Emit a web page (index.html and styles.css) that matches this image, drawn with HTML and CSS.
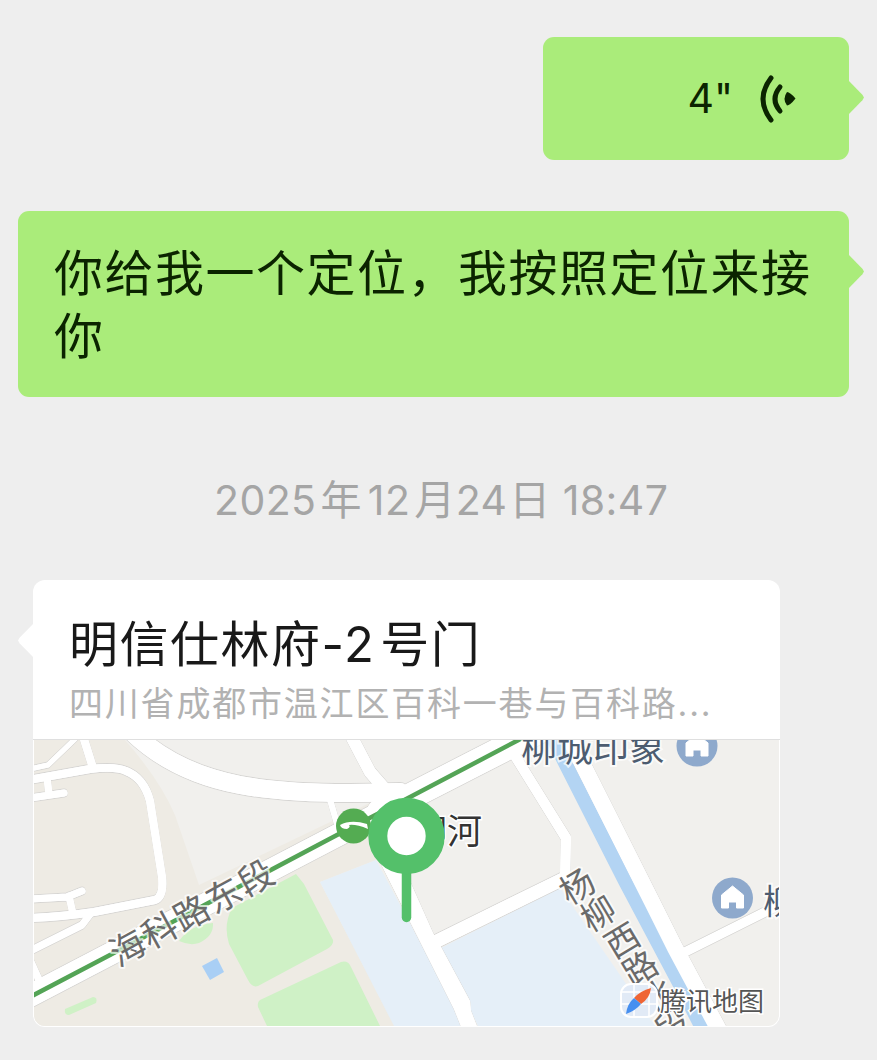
FILE: index.html
```html
<!DOCTYPE html>
<html lang="zh-CN">

<head>
  <meta charset="UTF-8">
  <meta name="viewport" content="width=device-width, initial-scale=1.0">
  <title>聊天记录</title>
  <link rel="stylesheet" href="styles.css">
</head>

<body>
  <div class="chat">
    <!-- 语音消息 -->
    <div class="bubble voice">
      <span class="second">4"</span>
      <svg class="wave" width="36" height="48" viewBox="0 0 36 48">
        <path d="M11 3 Q-5 24 11 45" stroke-width="5" />
        <path d="M20 12 Q10 24 20 36" stroke-width="5" />
        <path class="dot" d="M27 17 Q30 17 35.500 23.500 Q30 30.500 27 30.500 Q22 24 27 17 Z" />
      </svg>
    </div>
    <!-- 文字消息 -->
    <div class="bubble text">你给我一个定位，我按照定位来接你</div>
    <!-- 时间 -->
    <p class="time"><span>2025</span>年<span>12</span>月<span class="day">24</span>日<span class="clock">18:47</span></p>
    <!-- 位置消息 -->
    <div class="card">
      <div class="info">
        <p class="name">明信仕林府<span>-2</span>号门</p>
        <p class="address">四川省成都市温江区百科一巷与百科路<span>...</span></p>
      </div>
      <svg class="map" width="745" height="286" viewBox="34 740 745 286">
        <!-- 地块 -->
        <path class="land" d="M34 740H779V1026H34Z" />
        <path class="land-left" d="M34 740H125Q160 780 175 815L199 885L376 800L376 860L320 882L395 1026H34Z" />
        <path class="school" d="M320 882L376 860L465 1026H394Z" />
        <path class="school" d="M441 948L560 888L620 975L655 1026H478Z" />
        <path class="grass" d="M232 908L296 874L304 884L333 940Q334 945 327 949L258 986Q252 988 248 980L229 944Q223 925 232 908Z" />
        <path class="grass" d="M260 1000L341 962Q348 960 351 967L380 1026H267L258 1007Q257 1002 260 1000Z" />
        <path class="grass" d="M179 941Q190 925 213 923Q214 936 199 943Q190 946 179 941Z" />
        <path class="grass" d="M65 1009L93 997Q98 997 96 1003L69 1015Q64 1015 65 1009Z" />
        <path class="pool" d="M202 966L217 958L224 972L210 980Z" />
        <!-- 道路 -->
        <g class="road-edge">
          <use href="#roads" />
        </g>
        <path class="river" d="M548 728L565 763L625 881L679 983L703 1030" />
        <g class="road">
          <g id="roads">
            <path stroke-width="8" d="M30 780L34 779L90 769Q116 766 126 771Q144 778 150 801L162 877Q164 897 155 900L94 912Q60 917 30 918" />
            <path stroke-width="8" d="M93 768L83 736" />
            <path stroke-width="5" d="M30 769L48 765L76 738" />
            <path stroke-width="7" d="M47 778L49 794M30 798L64 793" />
            <path stroke-width="7" d="M30 899L67 897L82 891M69 896L73 914" />
            <path stroke-width="7" d="M30 951L82 925L91 913M30 960L39 980" />
            <path stroke-width="18" d="M130 730Q172 772 240 785Q300 796 400 792" />
            <path stroke-width="12" d="M348 730L370 772L384 788" />
            <path stroke-width="6" d="M329 796L340 834" />
            <path stroke-width="22" d="M20 1001L340 834L550 724" />
            <path stroke-width="26" d="M380 812L540 730" />
            <path class="fill" d="M374 850L454 1009L464 1034H480L471 1011L470 1001L441 947L433 933L396 850Z" />
            <path stroke-width="13" d="M437 941L565 878" />
            <path stroke-width="10" d="M565 878L566 838L512 751" />
            <path stroke-width="16" d="M566 731L582 763L651 900L675 948L721 1034" />
            <path stroke-width="9" d="M679 955L785 902" />
          </g>
        </g>
        <!-- 地铁线 -->
        <path class="metro-line" d="M30 997L110 955L337 835L412 796L530 734" />
        <!-- 路名 -->
        <text class="road-name" transform="translate(192 912) rotate(-28.600)" dy="0.380em">海科路东段</text>
        <g class="road-name side">
          <text transform="translate(577 886) rotate(-31)" dy="0.380em">杨</text>
          <text transform="translate(598 913) rotate(-31)" dy="0.380em">柳</text>
          <text transform="translate(622 940) rotate(-31)" dy="0.380em">西</text>
          <text transform="translate(640 968) rotate(-31)" dy="0.380em">路</text>
          <text transform="translate(656 996) rotate(-31)" dy="0.380em">北</text>
          <text transform="translate(672 1025) rotate(-31)" dy="0.380em">段</text>
        </g>
        <!-- 地点 -->
        <text class="poi" x="521" y="762">柳城印象</text>
        <text class="poi small" x="763" y="914">柳</text>
        <g id="house">
          <circle class="poi-bg" cx="732.500" cy="898" r="20.500" />
          <path class="poi-icon" d="M732.500 886L743.500 895V908H736.500V902H728.500V908H721.500V895Z" />
        </g>
        <use href="#house" x="-35.500" y="-152" />
        <text class="station" x="377" y="843.500">杨柳河</text>
        <circle class="metro" cx="353.500" cy="826" r="17.500" />
        <path class="metro-icon" d="M340 825Q351 819 367 824L368 829Q356 824 349 825Q351 827 347 829Q341 829 340 825Z" />
        <!-- 定位图钉 -->
        <path class="pin-line" d="M406.500 865V917.500" />
        <circle class="pin" cx="406.500" cy="836" r="28.700" />
        <!-- 腾讯地图 -->
        <rect class="logo" x="621" y="984" width="36" height="33" rx="10" />
        <path class="logo-grid" d="M621 1004H657M634 984V1017M649 984V1017M621 992H657" />
        <path class="logo-red" d="M651 988Q640 991 634 998L641 1004Q650 998 651 988Z" />
        <path class="logo-blue" d="M634 998Q627 1004 626 1014Q635 1011 641 1004Z" />
        <text class="brand" x="660" y="1011">腾讯地图</text>
      </svg>
    </div>
  </div>
</body>

</html>
```
FILE: styles.css
```css
* {
  margin: 0;
  padding: 0;
  box-sizing: border-box;
}

body {
  background: #eee;
  font-family: Inter, "Noto Sans CJK SC", sans-serif;
}

.chat {
  display: flex;
  flex-direction: column;
  width: 877px;
  height: 1060px;
  padding: 37px 28px 0 18px;
  overflow: hidden;
}

.bubble {
  position: relative;
  align-self: flex-end;
  border-radius: 11px;
  color: #0b2400;
  background: #aaec7a;
}

/* 气泡的小三角 */
.bubble::after {
  content: "";
  position: absolute;
  top: 43px;
  right: -15px;
  width: 16px;
  height: 35px;
  background: #aaec7a;
  clip-path: polygon(0 0, 90% 42%, 100% 50%, 90% 58%, 0 100%);
}

.voice {
  display: flex;
  align-items: center;
  justify-content: flex-end;
  width: 306px;
  height: 123px;
  padding-right: 53px;
}

.voice .second {
  margin-right: 27px;
  padding-bottom: 2px;
  font-size: 41px;
}

.wave path {
  fill: none;
  stroke: #0b2400;
  stroke-linecap: round;
}

.wave .dot {
  fill: #0b2400;
  stroke: none;
}

.text {
  width: 831px;
  height: 186px;
  margin-top: 51px;
  padding: 27px 36px 0;
  font-family: "Noto Sans CJK SC", sans-serif;
  font-size: 49px;
  letter-spacing: 1.5px;
  line-height: 63px;
}

.time {
  margin: 71px 0 0 196px;
  color: #a5a5a5;
  font-size: 41px;
  letter-spacing: 0.4px;
  line-height: 64px;
  white-space: nowrap;
}

.time span {
  margin: 0 4px 0 6px;
}

.time span:first-child {
  margin-left: 0;
}

.time .day {
  margin: 0 2px 0 0;
}

.time .clock {
  margin: 0 0 0 12px;
}

.card {
  position: relative;
  width: 747px;
  height: 447px;
  margin: 48px 0 0 15px;
  border-radius: 12px;
  background: #fff;
}

.card::before {
  content: "";
  position: absolute;
  top: 43px;
  left: -15px;
  width: 16px;
  height: 35px;
  background: #fff;
  clip-path: polygon(100% 0, 10% 42%, 0 50%, 10% 58%, 100% 100%);
}

.info {
  height: 160px;
  padding: 33px 36px 0;
  border-bottom: 1px solid #dfdfdf;
  white-space: nowrap;
}

.name {
  color: #191919;
  font-size: 49px;
  letter-spacing: 1.5px;
  line-height: 63px;
}

.name span {
  margin-right: 5px;
}

.address {
  color: #b2b2b2;
  font-size: 34px;
  letter-spacing: 1.8px;
  line-height: 56px;
}

.map {
  display: block;
  margin-left: 1px;
  border-radius: 0 0 11px 11px;
  font-family: "Noto Sans CJK SC", sans-serif;
}

.land {
  fill: #f1f0ed;
}

.land-left {
  fill: #eeebe4;
}

.school {
  fill: #e5eff8;
}

.grass {
  fill: #cff1c6;
}

.pool {
  fill: #a9cff5;
}

.river {
  fill: none;
  stroke: #b3d4f3;
  stroke-width: 14px;
}

.road {
  fill: none;
  stroke: #fff;
  stroke-linecap: round;
  stroke-linejoin: round;
}

/* 同样的道路加一圈投影当描边 */
.road-edge {
  fill: none;
  stroke: #fff;
  stroke-linecap: round;
  stroke-linejoin: round;
  filter: drop-shadow(0 1px 0 #d6d5d3) drop-shadow(0 -1px 0 #d6d5d3);
}

#roads .fill {
  fill: #fff;
  stroke: none;
}

.metro-line {
  fill: none;
  stroke: #54a456;
  stroke-width: 4.5px;
}

.road-name {
  fill: #6a6a6a;
  stroke: #fff;
  stroke-width: 4px;
  stroke-opacity: 0.7;
  stroke-linejoin: round;
  paint-order: stroke;
  font-size: 35px;
  letter-spacing: 1.5px;
  text-anchor: middle;
}

.side {
  font-size: 34px;
  letter-spacing: 0;
}

.poi {
  fill: #4d5c70;
  stroke: #fff;
  stroke-width: 4px;
  stroke-opacity: 0.7;
  paint-order: stroke;
  font-size: 36px;
}

.poi.small {
  font-size: 34px;
}

.poi-bg {
  fill: #8ea9cc;
}

.poi-icon {
  fill: #fff;
  stroke: #fff;
  stroke-width: 1px;
  stroke-linejoin: round;
}

.station {
  fill: #333;
  stroke: #fff;
  stroke-width: 3px;
  paint-order: stroke;
  font-size: 35px;
}

.metro {
  fill: #54ac52;
}

.metro-icon {
  fill: #fff;
}

.pin {
  fill: #fff;
  stroke: #54c06a;
  stroke-width: 19px;
}

.pin-line {
  stroke: #54c06a;
  stroke-width: 9.5px;
  stroke-linecap: round;
}

.logo {
  fill: #e1eaf6;
  stroke: #fff;
  stroke-width: 2px;
}

.logo-grid {
  fill: none;
  stroke: #fff;
  stroke-width: 1.5px;
}

.logo-red {
  fill: #ef6535;
}

.logo-blue {
  fill: #468ff0;
}

.brand {
  fill: #555;
  stroke: #fff;
  stroke-width: 3px;
  paint-order: stroke;
  font-size: 26px;
}
```
